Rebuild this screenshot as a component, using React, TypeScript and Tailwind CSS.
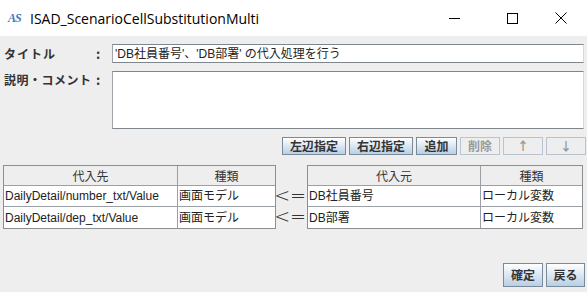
import React from "react";

const jp = { fontFamily: '"Noto Sans CJK JP", "Liberation Sans", sans-serif' };
const mixed = { fontFamily: '"Liberation Sans", "Noto Sans CJK JP", sans-serif' };

function Btn({ label, w, disabled, h = 18 }: { label: string; w: number; disabled?: boolean; h?: number }) {
  return (
    <div
      className={
        "flex items-center justify-center border text-[12px] font-bold leading-none " +
        (disabled
          ? "border-[#b8c4cf] bg-[#eeeeee] text-[#9a9a9a]"
          : "border-[#7a8a99] bg-gradient-to-b from-[#ffffff] to-[#b8cfe5] text-[#333333]")
      }
      style={{ width: w, height: h, ...jp }}
    >
      {label}
    </div>
  );
}

function Table({ cols, widths, rows }: { cols: string[]; widths: number[]; rows: string[][] }) {
  return (
    <div className="border border-[#8a8f94] bg-[#eeeeee] flex flex-col" style={{ width: widths.reduce((a, b) => a + b, 0) + 2 }}>
      <div className="flex h-[20px] border-b border-[#9aa0a6]">
        {cols.map((c, i) => (
          <div
            key={i}
            className={"flex items-center justify-center text-[12px] text-[#333] " + (i === 0 ? "border-r border-[#9aa0a6]" : "")}
            style={{ width: widths[i], ...jp }}
          >
            {c}
          </div>
        ))}
      </div>
      {rows.map((r, ri) => (
        <div key={ri} className="flex h-[21px] bg-white border-b border-[#9aa0a6] last:border-b-0">
          {r.map((c, i) => (
            <div
              key={i}
              className={"flex items-center pl-[1px] text-[12px] text-[#222] whitespace-nowrap overflow-hidden " + (i === 0 ? "border-r border-[#9aa0a6]" : "")}
              style={{ width: widths[i], ...mixed }}
            >
              {c}
            </div>
          ))}
        </div>
      ))}
    </div>
  );
}

export default function App() {
  return (
    <div className="w-[587px] h-[292px] bg-[#eeeeee] flex flex-col overflow-hidden">
      {/* Title bar */}
      <div className="h-[36px] bg-white flex items-center shrink-0">
        <span
          className="ml-[8px] w-[16px] text-[12px] italic font-bold text-[#4a78b8] tracking-[-1px] leading-none"
          style={{ fontFamily: '"Liberation Serif", serif' }}
        >
          AS
        </span>
        <span className="ml-[6px] text-[14px] text-black" style={{ fontFamily: '"Open Sans", "Noto Sans", sans-serif' }}>
          ISAD_ScenarioCellSubstitutionMulti
        </span>
        <div className="ml-auto flex items-center h-full">
          <div className="w-[58px] h-full flex items-center justify-center">
            <div className="w-[11px] h-[1px] bg-black" />
          </div>
          <div className="w-[58px] h-full flex items-center justify-center">
            <div className="w-[11px] h-[11px] border border-black" />
          </div>
          <div className="w-[46px] h-full flex items-center justify-center pr-[6px]">
            <svg width="12" height="12" viewBox="0 0 12 12">
              <path d="M0.5 0.5 L11.5 11.5 M11.5 0.5 L0.5 11.5" stroke="black" strokeWidth="1" />
            </svg>
          </div>
        </div>
      </div>

      {/* Title row */}
      <div className="flex items-center h-[19px] mt-[8px] shrink-0">
        <span className="w-[96px] pl-[4px] text-[12px] font-bold text-[#333] whitespace-nowrap tracking-[1px]" style={jp}>タイトル</span>
        <span className="w-[16px] text-[13px] font-bold text-[#333]" style={jp}>:</span>
        <div className="w-[472px] h-[19px] bg-white border-t border-b border-[#7f868c] border-l border-l-[#a0a4a8] border-r border-r-[#d8d8d8] flex items-center pl-[2px] text-[12px] text-[#222] whitespace-nowrap" style={mixed}>
          'DB社員番号'、'DB部署' の代入処理を行う
        </div>
      </div>

      {/* Comment row */}
      <div className="flex items-start mt-[8px] shrink-0">
        <span className="w-[96px] pl-[4px] text-[12px] font-bold text-[#333] whitespace-nowrap leading-[17px] tracking-[0.5px]" style={jp}>説明・コメント</span>
        <span className="w-[16px] text-[13px] font-bold text-[#333] leading-[17px]" style={jp}>:</span>
        <div className="w-[472px] h-[58px] bg-white border-t border-b border-[#7f868c] border-l border-l-[#a0a4a8] border-r border-r-[#d8d8d8]" />
      </div>

      {/* Buttons row */}
      <div className="flex justify-end gap-[3px] pr-[1px] mt-[8px] shrink-0">
        <Btn label="左辺指定" w={64} />
        <Btn label="右辺指定" w={64} />
        <Btn label="追加" w={41} />
        <Btn label="削除" w={40} disabled />
        <Btn label="↑" w={40} disabled />
        <Btn label="↓" w={40} disabled />
      </div>

      {/* Tables */}
      <div className="flex items-start mt-[10px] pl-[3px] shrink-0">
        <Table
          cols={["代入先", "種類"]}
          widths={[174, 97]}
          rows={[
            ["DailyDetail/number_txt/Value", "画面モデル"],
            ["DailyDetail/dep_txt/Value", "画面モデル"],
          ]}
        />
        <div className="w-[31px] flex flex-col pt-[20px]">
          {["a", "b"].map((k) => (
            <div key={k} className="h-[21px] flex items-center justify-end pr-[1px] text-[19px] font-light text-[#333] leading-none" style={{ fontFamily: '"DejaVu Sans", sans-serif' }}>
              &lt;=
            </div>
          ))}
        </div>
        <Table
          cols={["代入元", "種類"]}
          widths={[173, 101]}
          rows={[
            ["DB社員番号", "ローカル変数"],
            ["DB部署", "ローカル変数"],
          ]}
        />
      </div>

      {/* Bottom buttons */}
      <div className="flex justify-end gap-[3px] pr-[2px] mt-auto mb-[5px]">
        <Btn label="確定" w={40} h={24} />
        <Btn label="戻る" w={39} h={24} />
      </div>
    </div>
  );
}
